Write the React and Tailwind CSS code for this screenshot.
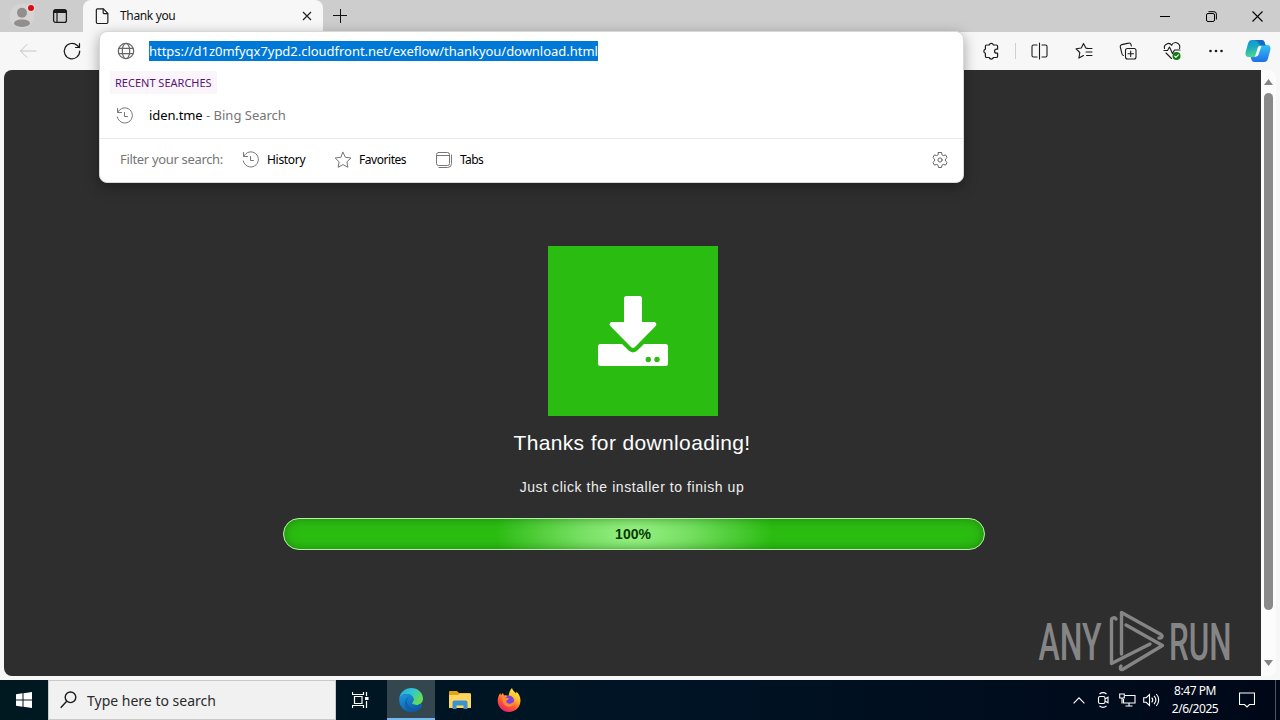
import { clsx } from 'clsx'

function Icon({ size = 20, width = 1, className, children }) {
  return (
    <svg
      width={size}
      height={size}
      viewBox="0 0 20 20"
      fill="none"
      stroke="currentColor"
      strokeWidth={width}
      strokeLinecap="round"
      strokeLinejoin="round"
      className={clsx('shrink-0', className)}
    >
      {children}
    </svg>
  )
}

function HistoryIcon() {
  return (
    <Icon className="text-[#767676]">
      <path d="M2.500 2.500v4h4M2.800 6.300A7.600 7.600 0 1 1 2.300 11" />
      <path d="M9.500 6.500v4h3" />
    </Icon>
  )
}

function Slot({ className, children }) {
  return <div className={clsx('flex h-full shrink-0 items-center justify-center', className)}>{children}</div>
}

/* Tab strip with window buttons */
function TabStrip() {
  return (
    <div className="flex h-8 bg-[#cdcdcd]">
      <div className="flex w-[83px]">
        <Slot className="w-11">
          <svg width="26" height="26" viewBox="0 0 26 26">
            <circle cx="13" cy="13" r="12.500" fill="#d6d4d2" />
            <circle cx="13" cy="9.700" r="5" fill="#918f8d" />
            <path d="M5 21c0-3 2.500-4.500 8-4.500s8 1.500 8 4.500c-2 2.300-5 3-8 3s-6-.7-8-3z" fill="#918f8d" />
            <circle cx="22" cy="5" r="4" fill="#e0dedd" />
            <circle cx="22" cy="5" r="3" fill="#d90b14" />
          </svg>
        </Slot>
        <Slot className="w-8">
          <svg width="16" height="16" viewBox="0 0 16 16" fill="none" stroke="#1b1b1b">
            <rect x="1.600" y="1.600" width="12.800" height="12.800" rx="2" strokeWidth="1.300" />
            <path d="M2 3.500h12" strokeWidth="3" />
            <path d="M5 4v10" strokeWidth="1.200" />
          </svg>
        </Slot>
      </div>
      <div className="flex w-[240px] items-center rounded-t-lg bg-[#f7f7f7] pl-2.5">
        <Icon size={18} width="1.3" className="text-[#1b1b1b]">
          <path d="M5 2h6.500L16.500 7v10a1.300 1.300 0 0 1-1.300 1.300H5A1.300 1.300 0 0 1 3.700 17V3.300A1.300 1.300 0 0 1 5 2z" />
          <path d="M11.300 2.200V6a1.300 1.300 0 0 0 1.300 1.300h3.700" />
        </Icon>
        <span className="ml-[9px] text-[12px] tracking-[-0.35px] text-[#111]">Thank you</span>
        <svg width="10" height="10" viewBox="0 0 10 10" stroke="#222" strokeWidth="1.200" className="mr-[11px] ml-auto">
          <path d="M1 1l8 8M9 1L1 9" />
        </svg>
      </div>
      <Slot className="w-[34px]">
        <svg width="14" height="14" viewBox="0 0 14 14" stroke="#111">
          <path d="M7.500 0v14M0 6.500h14" />
        </svg>
      </Slot>
      <div className="ml-auto flex text-black">
        <Slot className="w-[46px]">
          <svg width="10" height="11" stroke="currentColor">
            <path d="M0 5.500h10" />
          </svg>
        </Slot>
        <Slot className="w-[46px]">
          <svg width="11" height="11" viewBox="0 0 11 11" fill="none" stroke="currentColor">
            <rect x=".5" y="2.500" width="8" height="8" rx="1.500" />
            <path d="M2.500 .7h5.500a2.400 2.400 0 0 1 2.400 2.400v5.400" />
          </svg>
        </Slot>
        <Slot className="w-[46px]">
          <svg width="11" height="11" viewBox="0 0 11 11" stroke="currentColor" strokeWidth="1.100">
            <path d="M.5 .5l10 10M10.500 .5l-10 10" />
          </svg>
        </Slot>
      </div>
    </div>
  )
}

function CopilotLogo() {
  return (
    <svg width="26" height="24" viewBox="0 0 26 24">
      <defs>
        <linearGradient id="cpLeft" x1="0" y1="0" x2=".3" y2="1">
          <stop offset="0" stopColor="#1592d8" />
          <stop offset=".45" stopColor="#17a9c4" />
          <stop offset="1" stopColor="#52d68c" />
        </linearGradient>
        <linearGradient id="cpRight" x1="0" y1="0" x2="0" y2="1">
          <stop offset="0" stopColor="#34c3f5" />
          <stop offset="1" stopColor="#1f6fe6" />
        </linearGradient>
      </defs>
      <path d="M7 1h9.500c2 0 2.700 1 3.300 3l.8 2.500h-3c-2.300 0-3.300 1-4 3L11 16c-.5 1.500-1.500 2-3 2H4c-3 0-4-2-3.300-5L3 4.500C3.700 2 5 1 7 1z" fill="url(#cpLeft)" />
      <path d="M19 23H9.500c-2 0-2.700-1-3.300-3l-.6-2h3c2.300 0 3-1 3.700-3L15 8c.5-1.500 1.500-2 3-2h4c3 0 4 2 3.300 5L23 19.500c-.7 2.500-2 3.500-4 3.500z" fill="url(#cpRight)" />
      <path d="M9 1h7.500c2 0 2.700 1 3.300 3l.8 2.500h-4C14 6.500 13.500 1.500 9 1z" fill="#1769c9" />
      <path d="M14.500 7h2L13.500 15.500c-.6 1.600-1.300 2-3.500 2l2.500-8C13 8 13.500 7.200 14.500 7z" fill="#f7f7f7" />
    </svg>
  )
}

function Toolbar() {
  return (
    <div className="flex h-[38px] items-center bg-[#f7f7f7] pr-0.5 pl-1.5 text-[#1b1b1b]">
      <Slot className="w-11">
        <Icon className="text-[#c4c4c4]">
          <path d="M18 10H2.500M9 3.500L2.500 10 9 16.500" />
        </Icon>
      </Slot>
      <Slot className="w-11">
        <Icon width="1.2">
          <path d="M17.700 10a7.700 7.700 0 1 1-2.400-5.500l2.200 2M17.500 2.500v4h-4" />
        </Icon>
      </Slot>
      <Slot className="ml-auto w-11">
        <Icon width="1.2">
          <path d="M5.700 4h2.500a2.200 2.200 0 0 1 4.200 0h2.900a1.300 1.300 0 0 1 1.300 1.300v2.900h-1a2 2 0 0 0 0 4h1v3a1.300 1.300 0 0 1-1.300 1.300h-2.900a2.200 2.200 0 0 1-4.200 0H5.700a1.300 1.300 0 0 1-1.300-1.300v-2.900a2.200 2.200 0 0 1 0-4.200V5.300A1.300 1.300 0 0 1 5.700 4z" />
        </Icon>
      </Slot>
      <Slot className="w-[5px]">
        <div className="h-4 w-px bg-[#cfcfcf]" />
      </Slot>
      <Slot className="w-11">
        <Icon width="1.1">
          <path d="M9.500 2v16M7 4H3.500A1.500 1.500 0 0 0 2 5.500v9A1.500 1.500 0 0 0 3.500 16H7M12 4h3.500A1.500 1.500 0 0 1 17 5.500v9a1.500 1.500 0 0 1-1.500 1.500H12" />
        </Icon>
      </Slot>
      <Slot className="w-11">
        <Icon width="1.1">
          <path d="M14.500 7.500l-2.700-.5L9.500 2.500 7.300 7l-5.200.8 3.700 3.700-.9 5.600L9.500 14.500M12.500 7.500h5.500M12 11h6M12.500 14.500h5.500" />
        </Icon>
      </Slot>
      <Slot className="w-11">
        <Icon width="1.1">
          <rect x="7.500" y="7.500" width="10.500" height="10.500" rx="2" />
          <path d="M12.700 10v5.500M10 12.700h5.500M5.500 14.500a2 2 0 0 1-1.500-1.500L2.300 6a2 2 0 0 1 1.500-2.400l6.700-1.500A2 2 0 0 1 13 3.500l.3 1.500" />
        </Icon>
      </Slot>
      <Slot className="w-11">
        <Icon width="1.1">
          <path d="M2.500 7.500A4 4 0 0 1 9.700 4.300a4.200 4.200 0 0 1 7.800 3.200M2 9.500h3.500L7.500 6l3 6.500L12.500 9h5.500M4 12l5.500 5.500" />
          <circle cx="14.500" cy="15" r="4" fill="#127a12" stroke="none" />
          <path d="M12.700 15.200l1.200 1.200 2.500-2.600" stroke="#fff" />
        </Icon>
      </Slot>
      <Slot className="w-11">
        <Icon>
          <g fill="currentColor" stroke="none">
            <circle cx="4.500" cy="10" r="1.300" />
            <circle cx="10" cy="10" r="1.300" />
            <circle cx="15.500" cy="10" r="1.300" />
          </g>
        </Icon>
      </Slot>
      <Slot className="w-10">
        <CopilotLogo />
      </Slot>
    </div>
  )
}

/* Address bar dropdown, floats over the toolbar and the page */
function AddressPopup() {
  return (
    <div className="absolute top-[31px] left-[99px] flex h-[152px] w-[865px] flex-col rounded-lg border border-[#d8d8d8] bg-white shadow-[0_4px_14px_rgba(0,0,0,0.35)]">
      <div className="flex h-[38px] items-center pl-4">
        <Icon width="1.2" className="text-[#666]">
          <circle cx="10" cy="10" r="7.700" />
          <ellipse cx="10" cy="10" rx="3.700" ry="7.700" />
          <path d="M3 7.300h14M3 12.700h14" />
        </Icon>
        <span className="ml-[13px] h-5 w-[449px] bg-[#0078d7] text-[13px] leading-5 tracking-[-0.03px] whitespace-nowrap text-white">
          https://d1z0mfyqx7ypd2.cloudfront.net/exeflow/thankyou/download.html
        </span>
      </div>
      <div className="mt-px ml-2.5 flex h-[23px] w-[107px] items-center bg-[#faf5fb] pt-px pl-[5px] text-[11px] whitespace-nowrap text-[#5c1377]">
        RECENT SEARCHES
      </div>
      <div className="mt-[10px] flex h-6 items-center pl-[15px] text-[13px] whitespace-pre">
        <HistoryIcon />
        <span className="ml-3.5 tracking-[-0.1px] text-black">iden.tme</span>
        <span className="text-[#767676]"> - Bing Search</span>
      </div>
      <div className="mt-auto flex h-11 items-center border-t border-[#e8e8e8] pb-0.5 pl-5 text-[12px] text-black">
        <span className="w-[121px] text-[13px] tracking-[-0.33px] text-[#767676]">Filter your search:</span>
        <div className="flex w-[92px] items-center gap-1.5">
          <HistoryIcon />
          <span className="tracking-[-0.3px]">History</span>
        </div>
        <div className="flex w-[101px] items-center gap-1.5">
          <Icon className="text-[#767676]">
            <path d="M10 2.300l2.400 5 5.500.7-4 3.800 1 5.500-4.900-2.700-4.900 2.700 1-5.500-4-3.800 5.500-.7z" />
          </Icon>
          <span className="tracking-[-0.45px]">Favorites</span>
        </div>
        <div className="flex items-center gap-1.5">
          <Icon className="text-[#767676]">
            <rect x="2.500" y="2.500" width="13" height="13" rx="2" />
            <path d="M2.500 5.500h13M5 17.500h8.500a4 4 0 0 0 4-4V5" />
          </Icon>
          <span className="tracking-[-0.6px]">Tabs</span>
        </div>
        <Icon className="mr-[13px] ml-auto text-[#666]">
          <circle cx="10" cy="10" r="2.100" />
          <path d="M8.500 2.500h3l.5 2.300 1.300.8 2.300-.7 1.500 2.600-1.700 1.600v1.800l1.700 1.600-1.500 2.600-2.300-.7-1.300.8-.5 2.300h-3L8 15.200l-1.300-.8-2.300.7-1.500-2.600 1.700-1.600V9.100L2.900 7.500l1.500-2.600 2.300.7L8 4.800z" />
        </Icon>
      </div>
    </div>
  )
}

function Watermark() {
  return (
    <svg width="200" height="64" viewBox="0 0 200 64" className="absolute right-[23px] bottom-[2px]">
      <g fill="#858585" fontFamily="Roboto, sans-serif" fontSize="51" fontWeight="500">
        <text x="0.500" y="49.500" textLength="63" lengthAdjust="spacingAndGlyphs">ANY</text>
        <text x="131" y="49.500" textLength="62.500" lengthAdjust="spacingAndGlyphs">RUN</text>
      </g>
      <g fill="none" stroke="#858585" strokeWidth="3.400" strokeLinecap="round" strokeLinejoin="round">
        <path d="M83.500 44V2.500L123 24.500c2 1.500 1 4-2 3.500" />
        <path d="M88 15L124.500 35.500 84.500 59.500c-2 .5-3-1.500-1.500-3.500" />
        <path d="M78 9c-1-2-4.500-1.500-4.500 1v43.500L112 34" />
      </g>
    </svg>
  )
}

function DownloadPage() {
  return (
    <div className="relative flex flex-1 flex-col items-center bg-[#2e2e2e] pt-44 pl-px text-white">
      <div className="flex size-[170px] items-center justify-center bg-[#2bbc12]">
        <svg width="70" height="70" viewBox="0 0 70 70" fill="#fff">
          <path d="M28.500 0h13a2.500 2.500 0 0 1 2.500 2.500V26h12a2.300 2.300 0 0 1 1.700 3.900L37 51a2.800 2.800 0 0 1-4 0L12.300 29.900A2.300 2.300 0 0 1 14 26h12V2.500A2.500 2.500 0 0 1 28.500 0z" />
          <path d="M2.500 48H24l6.600 6.600a6.200 6.200 0 0 0 8.800 0L46 48h21.500A2.500 2.500 0 0 1 70 50.500v17a2.500 2.500 0 0 1-2.500 2.500h-65A2.500 2.500 0 0 1 0 67.500v-17A2.500 2.500 0 0 1 2.500 48z" />
          <circle cx="50.300" cy="63.500" r="2.700" fill="#2bbc12" />
          <circle cx="59" cy="63.500" r="2.700" fill="#2bbc12" />
        </svg>
      </div>
      <h1 className="mt-[11px] mr-0.5 h-8 font-['Liberation_Sans',Arial,sans-serif] text-[21px] leading-8 tracking-[0.36px]">
        Thanks for downloading!
      </h1>
      <p className="mt-[18px] mr-0.5 h-5 font-['Liberation_Sans',Arial,sans-serif] text-[14px] leading-5 tracking-[0.56px] text-[#eee]">
        Just click the installer to finish up
      </p>
      <div className="mt-[21px] ml-0.5 flex h-8 w-[702px] items-center justify-center rounded-full border border-[#b5eda9] bg-[#2bbc12] bg-[radial-gradient(ellipse_138px_80px_at_center,#98f184_0%,#75df61_40%,transparent_100%)] shadow-[inset_0_0_10px_rgba(20,80,10,0.5)]">
        <span className="mr-0.5 font-['Liberation_Sans',Arial,sans-serif] text-[14px] font-bold text-[#073804]">100%</span>
      </div>
      <Watermark />
    </div>
  )
}

function Scrollbar() {
  return (
    <div className="flex w-[15px] flex-col items-center bg-[#fcfcfc] pt-[9px] pb-[10px]">
      <svg width="9" height="6" viewBox="0 0 9 6" fill="#858585">
        <path d="M4.500 0L9 6H0z" />
      </svg>
      <div className="mt-2 h-[517px] w-[9px] rounded-full bg-[#8a8a8a]" />
      <svg width="9" height="6" viewBox="0 0 9 6" fill="#858585" className="mt-auto">
        <path d="M0 0h9L4.500 6z" />
      </svg>
    </div>
  )
}

function EdgeLogo() {
  return (
    <svg width="24" height="24" viewBox="0 0 24 24">
      <defs>
        <linearGradient id="edgeTop" x1="0" y1="0" x2="1" y2=".5">
          <stop offset="0" stopColor="#2aa5df" />
          <stop offset=".5" stopColor="#2fc4d6" />
          <stop offset="1" stopColor="#66dc55" />
        </linearGradient>
        <linearGradient id="edgeLow" x1="0" y1="0" x2=".6" y2="1">
          <stop offset="0" stopColor="#1a9be2" />
          <stop offset="1" stopColor="#0c59a8" />
        </linearGradient>
      </defs>
      <path d="M.3 10.500C1 4.500 6 0 12.200 0 19 0 24 5 24 10.500c0 4-3 6.500-6.500 6.500-3 0-4.500-1-4.500-2 0-.8 1.500-1.300 1.500-3.500C14.500 8.500 11.500 6 8 6 4.500 6 1.500 8 .3 10.500z" fill="url(#edgeTop)" />
      <path d="M.3 10.500C1.500 7.500 4.500 6 8 6c3.500 0 6.500 2.500 6.500 5.500 0 2.200-1.500 2.700-1.500 3.500 0 1 1.500 2 4.500 2 2 0 3.300-.5 4.800-1.500.8 1 .8 2.500 0 4C20.200 22.500 16.500 24 12.500 24 5 24-.5 18 .3 10.500z" fill="url(#edgeLow)" />
      <path d="M13.200 8.200C11 8 8 9.500 8 13.500c0 5 5 8 9 7.500 2-.2 3.500-1 4.800-1.800.3-.2.600-.1.700.1-2 3-6 4.700-9.500 4.500C8 23 5.500 18.500 6 14.500c.4-3.700 3.500-6.500 7.200-6.300z" fill="#145b9f" opacity=".75" />
    </svg>
  )
}

function FirefoxLogo() {
  return (
    <svg width="24" height="24" viewBox="0 0 24 24">
      <defs>
        <linearGradient id="foxBody" x1=".8" y1="0" x2=".25" y2="1">
          <stop offset="0" stopColor="#fff04a" />
          <stop offset=".35" stopColor="#ffbd29" />
          <stop offset=".65" stopColor="#ff5a35" />
          <stop offset="1" stopColor="#e41d6e" />
        </linearGradient>
      </defs>
      <path d="M15 0c.6 2.500 2.700 3.500 4 5.500.3-.7.300-1.300.1-2C22 5.500 23.500 9 23.500 12.500 23.500 19 18.500 24 12 24S.7 19 .7 13c0-3.500 1-6 2.800-8l.3 2.200L6 5l1 2.500c1.500-.5 3-.3 4.500.5.500-3.500 1.500-6 3.500-8z" fill="url(#foxBody)" />
      <circle cx="12.300" cy="12.500" r="4.700" fill="#7542e5" />
      <path d="M5.500 9.500C8 9 9.500 10 12 10.300c-.3 1.500-2.300 1.700-2.700 2.700-.3 2 2.200 3.500 4.700 2.500 1.500-.5 2-1.500 3.500-1-1 3-3.500 4.500-6 4.200-4-.5-6.500-4.200-6-9.200z" fill="#ff8a2f" />
    </svg>
  )
}

function Taskbar() {
  return (
    <div className="flex h-10 items-stretch bg-linear-to-r from-[#001820] via-[#001425] to-[#000818] text-white">
      <Slot className="w-12">
        <svg width="16" height="16" viewBox="0 0 16 16" fill="#fff">
          <path d="M0 2.200l6.500-.9v6.200H0zM7.500 1.200L16 0v7.500H7.500zM0 8.500h6.500v6.200L0 13.800zM7.500 8.500H16V16l-8.500-1.200z" />
        </svg>
      </Slot>
      <div className="flex w-72 items-center border border-[#c9c9c9] bg-[#f1f1f1] pl-[11px]">
        <svg width="17" height="18" viewBox="0 0 17 18" fill="none" stroke="#1b1b1b" strokeWidth="1.400">
          <circle cx="10.500" cy="6.300" r="5.300" />
          <path d="M6.700 10.200L.7 16.700" />
        </svg>
        <span className="ml-[10px] text-[14px] text-[#2b2b2b]">Type here to search</span>
      </div>
      <Slot className="mr-[3px] w-12">
        <svg width="17" height="16" viewBox="0 0 17 16" fill="none" stroke="#fff" strokeWidth="1.200">
          <path d="M.5 0v2.500h11V0M2.500 4.500h7.500v7H2.500zM.5 16v-2.500h11V16M14.500 0v4M14.500 9v7" />
          <path d="M13 6.500h3.500" strokeWidth="3" />
        </svg>
      </Slot>
      <div className="flex w-12 items-center justify-center border-b-2 border-[#76b9ed] bg-[#34474e] pt-0.5">
        <EdgeLogo />
      </div>
      <Slot className="w-[49px]">
        <svg width="22" height="20" viewBox="0 0 22 20">
          <path d="M0 2a1 1 0 0 1 1-1h7l2 2h11v5H0z" fill="#e5a315" />
          <path d="M0 5h9l2-1.500h11V18H0z" fill="#ffd65f" />
          <path d="M3.500 19v-6.500a2 2 0 0 1 2-2h11a2 2 0 0 1 2 2V19h-4v-3.500h-7V19z" fill="#3c91cf" />
        </svg>
      </Slot>
      <Slot className="w-[49px]">
        <FirefoxLogo />
      </Slot>

      <div className="ml-auto flex items-center">
        <Slot className="w-6">
          <svg width="12" height="7" viewBox="0 0 12 7" fill="none" stroke="#fff" strokeWidth="1.200">
            <path d="M.6 6.300L6 .9l5.400 5.400" />
          </svg>
        </Slot>
        <Slot className="w-6">
          <svg width="12" height="16" viewBox="0 0 12 16" fill="none" stroke="#fff" strokeWidth="1.100">
            <rect x="1.500" y="4.500" width="6.500" height="7" rx="1.500" />
            <path d="M8 7l3-1.700v5.400L8 9M2.500 2c2-1.500 5-1.500 7 0M2.500 14c2 1.500 5 1.500 7 0" />
          </svg>
        </Slot>
        <Slot className="w-6">
          <svg width="17" height="14" viewBox="0 0 17 14" fill="none" stroke="#fff" strokeWidth="1.100">
            <path d="M6 2.500h10v7.500H4.500V6M10 10v3M6.500 13h7M.7 1h4.600v4H.7zM3 5v5.500" />
          </svg>
        </Slot>
        <Slot className="w-6">
          <svg width="17" height="14" viewBox="0 0 17 14" fill="none" stroke="#fff" strokeWidth="1.100">
            <path d="M.7 4.700h2.500L6.500 1.500v11L3.200 9.300H.7zM8.700 4.700c1.300 1.400 1.300 3.200 0 4.600M11 2.900c2.300 2.500 2.300 5.700 0 8.200M13.300 1c3.200 3.500 3.200 8.500 0 12" />
          </svg>
        </Slot>
        <div className="w-16 text-center text-[12px] leading-[18px] whitespace-nowrap">
          <div className="tracking-[-0.45px]">8:47 PM</div>
          <div className="tracking-[-0.45px]">2/6/2025</div>
        </div>
        <Slot className="w-10">
          <svg width="16" height="16" viewBox="0 0 16 16" fill="none" stroke="#fff" strokeWidth="1.100">
            <path d="M.5 1h15v11.500h-5L8 15l-2.500-2.500h-5z" />
          </svg>
        </Slot>
        <div className="mr-1 ml-2 h-10 w-px bg-[#4b5360]" />
      </div>
    </div>
  )
}

export default function App() {
  return (
    <div className="relative flex h-[720px] w-[1280px] flex-col overflow-hidden bg-[#f7f7f7] font-['Noto_Sans',sans-serif]">
      <TabStrip />
      <Toolbar />
      <div className="mx-1 mb-1 flex flex-1 overflow-hidden rounded-lg">
        <DownloadPage />
        <Scrollbar />
      </div>
      <Taskbar />
      <AddressPopup />
    </div>
  )
}
